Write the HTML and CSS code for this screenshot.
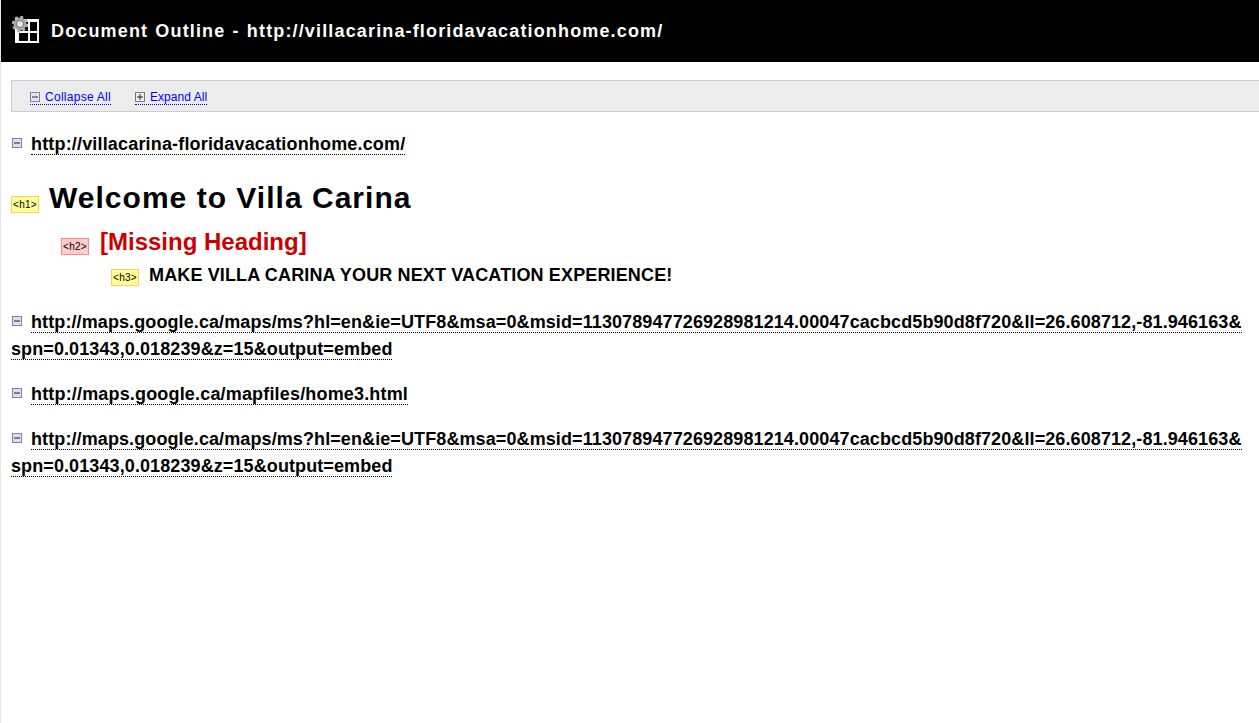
FILE: index.html
```html
<!DOCTYPE html>
<html lang="en">
<head>
<meta charset="utf-8">
<title>Document Outline</title>
<link rel="stylesheet" href="styles.css">
</head>
<body>
<header class="banner">
  <svg class="logo" width="28" height="28" viewBox="0 0 28 28">
    <path fill="#fff" d="M4 4h24v24H4z"/>
    <path fill="#000" d="M8 7h9v9H8zM19 7h7v9h-7zM8 18h9v8H8zM19 18h7v8h-7z"/>
    <circle cx="9" cy="9" r="6.500" fill="#a8a8a8"/>
    <circle cx="9" cy="9" r="7" fill="none" stroke="#b4b4b4" stroke-width="2.400" stroke-dasharray="3 2.500"/>
    <circle cx="9" cy="9" r="3.500" fill="#e8e8e8" stroke="#777"/>
  </svg>
  <h1 class="banner-title">Document Outline - http://villacarina-floridavacationhome.com/</h1>
</header>
<nav class="toolbar">
  <a class="tool tool-collapse" href="#"><svg class="tool-icon" width="10" height="10" viewBox="0 0 10 10"><rect x=".5" y=".5" width="9" height="9" fill="#e4e4ee" stroke="#8080b0"/><path d="M2 5h6" stroke="#222"/></svg><span class="tool-label">Collapse All</span></a>
  <a class="tool tool-expand" href="#"><svg class="tool-icon" width="10" height="10" viewBox="0 0 10 10"><rect x=".5" y=".5" width="9" height="9" fill="#eee" stroke="#777"/><path d="M2 5h6M5 2v6" stroke="#222"/></svg><span class="tool-label">Expand All</span></a>
</nav>
<main class="outline">
  <p class="frame frame-first frame-short"><svg class="toggle" width="10" height="10" viewBox="0 0 10 10"><rect x=".5" y=".5" width="9" height="9" fill="#dde" stroke="#8080b0"/><path d="M2 5h6" stroke="#222"/></svg><a class="url" href="#">http://villacarina-floridavacationhome.com/</a></p>
  <div class="heading level1"><span class="tag">&lt;h1&gt;</span><span class="h-text">Welcome to Villa Carina</span></div>
  <div class="heading level2"><span class="tag tag-missing">&lt;h2&gt;</span><span class="h-text">[Missing Heading]</span></div>
  <div class="heading level3"><span class="tag">&lt;h3&gt;</span><span class="h-text">MAKE VILLA CARINA YOUR NEXT VACATION EXPERIENCE!</span></div>
  <p class="frame frame-second"><svg class="toggle" width="10" height="10" viewBox="0 0 10 10"><rect x=".5" y=".5" width="9" height="9" fill="#dde" stroke="#8080b0"/><path d="M2 5h6" stroke="#222"/></svg><a class="url" href="#">http://maps.google.ca/maps/ms?hl=en&amp;ie=UTF8&amp;msa=0&amp;msid=113078947726928981214.00047cacbcd5b90d8f720&amp;ll=26.608712,-81.946163&amp;<br>spn=0.01343,0.018239&amp;z=15&amp;output=embed</a></p>
  <p class="frame frame-short"><svg class="toggle" width="10" height="10" viewBox="0 0 10 10"><rect x=".5" y=".5" width="9" height="9" fill="#dde" stroke="#8080b0"/><path d="M2 5h6" stroke="#222"/></svg><a class="url" href="#">http://maps.google.ca/mapfiles/home3.html</a></p>
  <p class="frame"><svg class="toggle" width="10" height="10" viewBox="0 0 10 10"><rect x=".5" y=".5" width="9" height="9" fill="#dde" stroke="#8080b0"/><path d="M2 5h6" stroke="#222"/></svg><a class="url" href="#">http://maps.google.ca/maps/ms?hl=en&amp;ie=UTF8&amp;msa=0&amp;msid=113078947726928981214.00047cacbcd5b90d8f720&amp;ll=26.608712,-81.946163&amp;<br>spn=0.01343,0.018239&amp;z=15&amp;output=embed</a></p>
</main>
</body>
</html>
```
FILE: styles.css
```css
html, body { height: 100%; }
body {
  margin: 0;
  background: #fff;
  border-left: 1px solid #e4e4e4;
  font-family: "Liberation Sans", Arial, sans-serif;
  color: #000;
  overflow: hidden;
}
.banner {
  height: 62px;
  background: #000;
  display: flex;
  align-items: center;
  padding-left: 10px;
  box-sizing: border-box;
}
.logo { flex: none; margin-top: -4px; }
.banner-title {
  margin: 0 0 0 12px;
  font-size: 18px;
  font-weight: bold;
  letter-spacing: 1.15px;
  word-spacing: 1px;
  color: #fff;
  white-space: nowrap;
}
.toolbar {
  margin: 18px 0 0 10px;
  height: 32px;
  box-sizing: border-box;
  background: #ececec;
  border: 1px solid #ccc;
  border-right: 0;
  display: flex;
  align-items: center;
  padding: 3px 0 0 18px;
  gap: 24px;
}
.tool {
  color: #00f;
  font-size: 12px;
  text-decoration: none;
  border-bottom: 1px dotted #00f;
  display: flex;
  align-items: center;
  line-height: 13px;
}
.tool-collapse { letter-spacing: .27px; }
.tool-expand { letter-spacing: .05px; }
.tool-icon { margin-right: 5px; }
.outline { padding-left: 10px; }
.frame {
  margin: 0 0 18px;
  font-size: 18px;
  font-weight: bold;
  line-height: 27px;
  letter-spacing: .1px;
}
.frame-short { letter-spacing: .17px; }
.frame-first { margin-top: 19px; margin-bottom: 23px; }
.frame-second { margin-top: 23px; }
.toggle { margin: 0 9px 0 1px; position: relative; top: -2px; }
.url {
  color: #000;
  text-decoration: none;
  border-bottom: 1px dotted #000;
}
.heading { display: flex; align-items: baseline; font-weight: bold; }
.tag {
  font-size: 10px;
  font-weight: normal;
  letter-spacing: .3px;
  background: #ffff99;
  border: 1px solid #fc6;
  padding: 0 1px;
  line-height: 15px;
  width: 24px;
  text-align: center;
  flex: none;
  margin-right: 10px;
  box-sizing: content-box;
}
.tag-missing { background: #fcc; border-color: #f88; }
.level1 { font-size: 30px; letter-spacing: 1.02px; }
.level2 { font-size: 24px; padding-left: 50px; color: #c00; margin-top: 13px; }
.level2 .tag { color: #000; margin-right: 11px; }
.level3 { font-size: 18px; padding-left: 100px; margin-top: 9px; letter-spacing: .14px; }
```
